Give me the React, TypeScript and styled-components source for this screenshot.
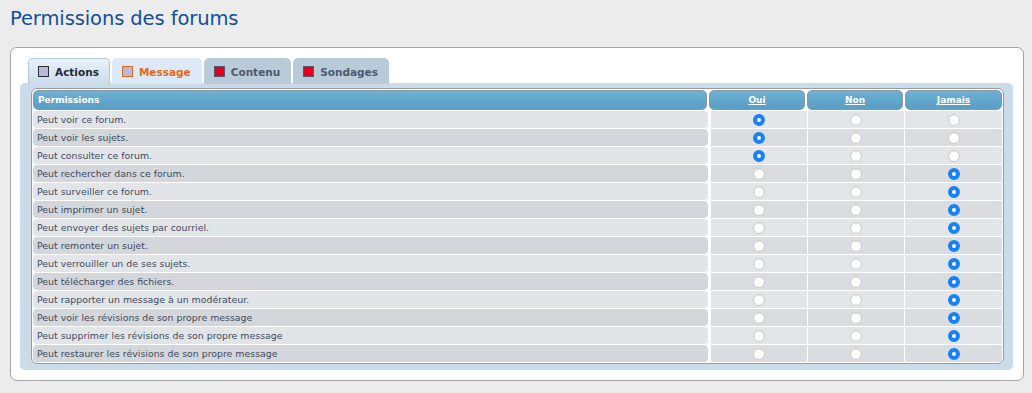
import styled, { createGlobalStyle } from "styled-components";

const GlobalStyle = createGlobalStyle`
  html, body {
    margin: 0;
    padding: 0;
    background: #ececec;
    font-family: "DejaVu Sans", Verdana, sans-serif;
  }
`;

type Choice = 0 | 1 | 2;

const permissions: { label: string; value: Choice }[] = [
  { label: "Peut voir ce forum.", value: 0 },
  { label: "Peut voir les sujets.", value: 0 },
  { label: "Peut consulter ce forum.", value: 0 },
  { label: "Peut rechercher dans ce forum.", value: 2 },
  { label: "Peut surveiller ce forum.", value: 2 },
  { label: "Peut imprimer un sujet.", value: 2 },
  { label: "Peut envoyer des sujets par courriel.", value: 2 },
  { label: "Peut remonter un sujet.", value: 2 },
  { label: "Peut verrouiller un de ses sujets.", value: 2 },
  { label: "Peut télécharger des fichiers.", value: 2 },
  { label: "Peut rapporter un message à un modérateur.", value: 2 },
  { label: "Peut voir les révisions de son propre message", value: 2 },
  { label: "Peut supprimer les révisions de son propre message", value: 2 },
  { label: "Peut restaurer les révisions de son propre message", value: 2 },
];

const tabs = [
  { name: "Actions", kind: "active" },
  { name: "Message", kind: "changed" },
  { name: "Contenu", kind: "plain" },
  { name: "Sondages", kind: "plain" },
] as const;

type TabKind = (typeof tabs)[number]["kind"];

export default function App() {
  return (
    <Page>
      <GlobalStyle />
      <Title>Permissions des forums</Title>
      <Panel>
        <TabBar>
          {tabs.map((t) => (
            <Tab key={t.name} $kind={t.kind}>
              <TabIcon $kind={t.kind} />
              {t.name}
            </Tab>
          ))}
        </TabBar>
        <TabBody>
          <Table>
            <HeadRow>
              <HeadCell $align="left">Permissions</HeadCell>
              <HeadCell $align="center">
                <HeadLink>Oui</HeadLink>
              </HeadCell>
              <HeadCell $align="center">
                <HeadLink>Non</HeadLink>
              </HeadCell>
              <HeadCell $align="center">
                <HeadLink>Jamais</HeadLink>
              </HeadCell>
            </HeadRow>
            {permissions.map((p, i) => (
              <Row key={p.label}>
                <LabelCell $alt={i % 2 === 1}>{p.label}</LabelCell>
                {[0, 1, 2].map((c) => (
                  <RadioCell key={c} $alt={i % 2 === 1}>
                    <Radio $checked={p.value === c} />
                  </RadioCell>
                ))}
              </Row>
            ))}
          </Table>
        </TabBody>
      </Panel>
    </Page>
  );
}

const Page = styled.div`
  padding: 0 8px 0 10px;
`;

const Title = styled.h2`
  margin: 0;
  padding: 7px 0 0;
  height: 47px;
  box-sizing: border-box;
  font-family: "DejaVu Sans", sans-serif;
  font-weight: normal;
  font-size: 19.5px;
  letter-spacing: -0.1px;
  color: #115098;
`;

const Panel = styled.div`
  width: 1014px;
  box-sizing: border-box;
  background: #ffffff;
  border: 1px solid #a3a3a3;
  border-radius: 7px;
  padding: 10px 10px 10px 9px;
`;

const TabBar = styled.div`
  display: flex;
  gap: 2px;
  padding-left: 8px;
  position: relative;
  z-index: 1;
`;

const Tab = styled.div<{ $kind: TabKind }>`
  display: flex;
  align-items: center;
  gap: 6px;
  height: 26px;
  box-sizing: border-box;
  padding: 0 10px 0 9px;
  border-radius: 5px 5px 0 0;
  font-size: 10.5px;
  font-weight: bold;
  border: 1px solid
    ${(p) => (p.$kind === "active" ? "#b4c8d8" : "transparent")};
  border-bottom: none;
  background: ${(p) =>
    p.$kind === "active"
      ? "linear-gradient(#e9f1f8, #cadcea)"
      : p.$kind === "changed"
      ? "#dbeaf6"
      : "#b9cad8"};
  color: ${(p) =>
    p.$kind === "active" ? "#222831" : p.$kind === "changed" ? "#e2681c" : "#4c5a73"};
`;

const TabIcon = styled.span<{ $kind: TabKind }>`
  display: inline-block;
  width: 9px;
  height: 9px;
  border: 1px solid
    ${(p) =>
      p.$kind === "active" ? "#2d2d35" : p.$kind === "changed" ? "#e2681c" : "#4c5a73"};
  background: ${(p) => (p.$kind === "plain" ? "#e0001b" : "#b6bad6")};
`;

const TabBody = styled.div`
  margin-top: -1px;
  background: #cadcea;
  border-radius: 5px;
  padding: 5px 9px 6px 11px;
`;

const Table = styled.div`
  background: #ffffff;
  border: 1px solid #9b9b9b;
  border-radius: 6px;
  padding: 1px;
  display: flex;
  flex-direction: column;
  gap: 1px;
`;

const HeadRow = styled.div`
  display: grid;
  grid-template-columns: 1fr 96px 96px 97px;
  column-gap: 2px;
  height: 20px;
`;

const Row = styled.div`
  display: grid;
  grid-template-columns: 1fr 96px 96px 97px;
  column-gap: 1px;
  height: 17px;
`;

const HeadCell = styled.div<{ $align: "left" | "center" }>`
  display: flex;
  align-items: center;
  justify-content: ${(p) => (p.$align === "left" ? "flex-start" : "center")};
  padding: 0 4px;
  border: 1px solid #8b98a4;
  border-radius: 5px;
  background: linear-gradient(#6cb0d3, #5a9ec5);
  color: #ffffff;
  font-size: 9px;
  font-weight: bold;
`;

const HeadLink = styled.span`
  text-decoration: underline;
`;

const LabelCell = styled.div<{ $alt: boolean }>`
  display: flex;
  align-items: center;
  padding-left: 4px;
  margin-right: 2px;
  border-radius: 4px;
  background: ${(p) => (p.$alt ? "#d3d7db" : "#e2e5e8")};
  color: #3f4a5c;
  font-size: 9.4px;
`;

const RadioCell = styled.div<{ $alt: boolean }>`
  display: flex;
  align-items: center;
  justify-content: center;
  background: ${(p) => (p.$alt ? "#dadde0" : "#e3e6e9")};
`;

const Radio = styled.span<{ $checked: boolean }>`
  width: 12px;
  height: 12px;
  box-sizing: border-box;
  border-radius: 50%;
  background: #ffffff;
  border: ${(p) => (p.$checked ? "4px solid #1782f5" : "1px solid #c9c9c9")};
  box-shadow: ${(p) => (p.$checked ? "none" : "inset 0 1px 1px rgba(0,0,0,0.08)")};
`;
